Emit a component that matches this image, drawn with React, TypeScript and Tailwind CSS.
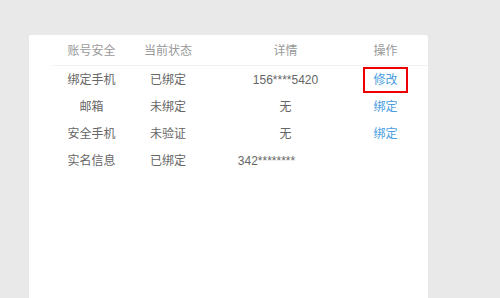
const rows = [
  { name: "绑定手机", status: "已绑定", detail: "156****5420", action: "修改", boxed: true },
  { name: "邮箱", status: "未绑定", detail: "无", action: "绑定" },
  { name: "安全手机", status: "未验证", detail: "无", action: "绑定" },
  { name: "实名信息", status: "已绑定", detail: "342********", action: "", shift: true },
];

const cols = "grid grid-cols-[77px_76px_159px_41px]";

export default function App() {
  return (
    <div
      className="h-[298px] w-[500px] overflow-hidden bg-[#e9e9e9] pt-[35px] pl-[29px] text-[12px]"
      style={{ fontFamily: '"Liberation Sans", "Noto Sans CJK SC", sans-serif' }}
    >
      <div className="h-[263px] w-[399px] rounded-tr-[3px] rounded-tl-[1px] bg-white pl-[24px]">
        <div className={`${cols} h-[31px] items-center border-b border-[#f2f2f2] pt-[2px] text-[#999]`}>
          <div className="text-center">账号安全</div>
          <div className="text-center">当前状态</div>
          <div className="text-center">详情</div>
          <div className="text-center">操作</div>
        </div>
        {rows.map((r) => (
          <div key={r.name} className={`${cols} h-[27px] items-center text-[#666]`}>
            <div className="text-center">{r.name}</div>
            <div className="text-center">{r.status}</div>
            <div className={`text-center ${r.shift ? "pr-[38px]" : ""}`}>{r.detail}</div>
            <div className="flex justify-center">
              {r.boxed ? (
                <span className="flex h-[26px] w-[45px] shrink-0 items-center justify-center border-2 border-[#ee0000] text-[#4a9ee0]">
                  {r.action}
                </span>
              ) : (
                <span className="text-[#4a9ee0]">{r.action}</span>
              )}
            </div>
          </div>
        ))}
      </div>
    </div>
  );
}
